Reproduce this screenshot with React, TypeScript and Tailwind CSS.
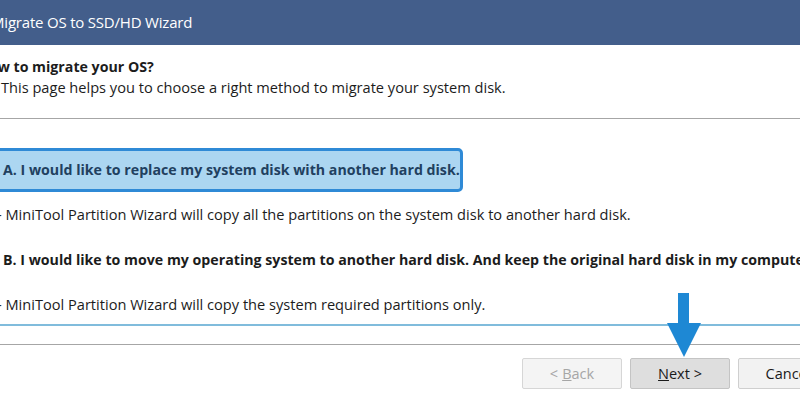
const FONT = "font-['Open_Sans','Noto_Sans',sans-serif]"

function WizardButton({ children, variant }: { children: React.ReactNode; variant: 'disabled' | 'focus' | 'normal' }) {
  const styles = {
    disabled: 'bg-[#f4f4f4] border-[#d6d6d6] text-[#a6a6a6]',
    focus:    'bg-[#dedede] border-[#c4c4c4] text-[#1a1a1a]',
    normal:   'bg-[#f2f2f2] border-[#cfcfcf] text-[#1a1a1a]',
  }[variant]
  return (
    <button className={`w-[100px] h-[31px] shrink-0 rounded-[2px] border text-[14.5px] flex items-center justify-center ${styles}`}>
      {children}
    </button>
  )
}

export default function App() {
  return (
    <div className={`relative w-[800px] h-[399px] overflow-hidden bg-white ${FONT}`}>
      {/* title bar */}
      <div className="h-[45px] bg-[#435e8b] flex items-center text-white text-[15px] tracking-[-0.2px] whitespace-nowrap">
        <span className="ml-[-9px]">Migrate OS to SSD/HD Wizard</span>
      </div>

      {/* header */}
      <div className="h-[74px] pt-[12px] text-[14.6px] text-[#1c1c1c] whitespace-nowrap border-b border-[#a6a6a6]">
        <div className="leading-[20px] font-bold text-[14.2px] ml-[-22px]">How to migrate your OS?</div>
        <div className="leading-[20px] ml-[1px]">This page helps you to choose a right method to migrate your system disk.</div>
      </div>

      {/* options */}
      <div className="text-[14.6px] text-[#1c1c1c] whitespace-nowrap">
        <div className="mt-[29px] ml-[-10px] w-[473px] h-[44px] border-[3px] border-[#2f8ad6] rounded-[5px] bg-[#acd6f1] flex items-center pl-[10px]">
          <span className="font-bold text-[14.2px] text-[#21405f]">A. I would like to replace my system disk with another hard disk.</span>
        </div>
        <div className="mt-[12px] leading-[20px] ml-[-3px]">- MiniTool Partition Wizard will copy all the partitions on the system disk to another hard disk.</div>
        <div className="mt-[26px] leading-[20px] ml-[3px] font-bold text-[14.2px]">B. I would like to move my operating system to another hard disk. And keep the original hard disk in my computer.</div>
        <div className="mt-[24px] leading-[20px] ml-[-3px]">- MiniTool Partition Wizard will copy the system required partitions only.</div>
      </div>

      <div className="mt-[10px] h-[2px] bg-[#80bcdc]" />
      <div className="mt-[18px] h-px bg-[#a6a6a6]" />

      {/* buttons */}
      <div className="mt-[13px] pl-[522px] flex gap-[8px]">
        <WizardButton variant="disabled">&lt; <span className="underline ml-[4px]">B</span>ack</WizardButton>
        <WizardButton variant="focus"><span className="underline">N</span>ext &gt;</WizardButton>
        <WizardButton variant="normal">Cancel</WizardButton>
      </div>

      {/* pointer arrow */}
      <svg className="absolute left-[667px] top-[293px]" width="34" height="65" viewBox="0 0 34 65">
        <rect x="11" y="0" width="11" height="32" fill="#1e88d4" />
        <polygon points="0,30 34,30 17,64" fill="#1e88d4" />
      </svg>
    </div>
  )
}
